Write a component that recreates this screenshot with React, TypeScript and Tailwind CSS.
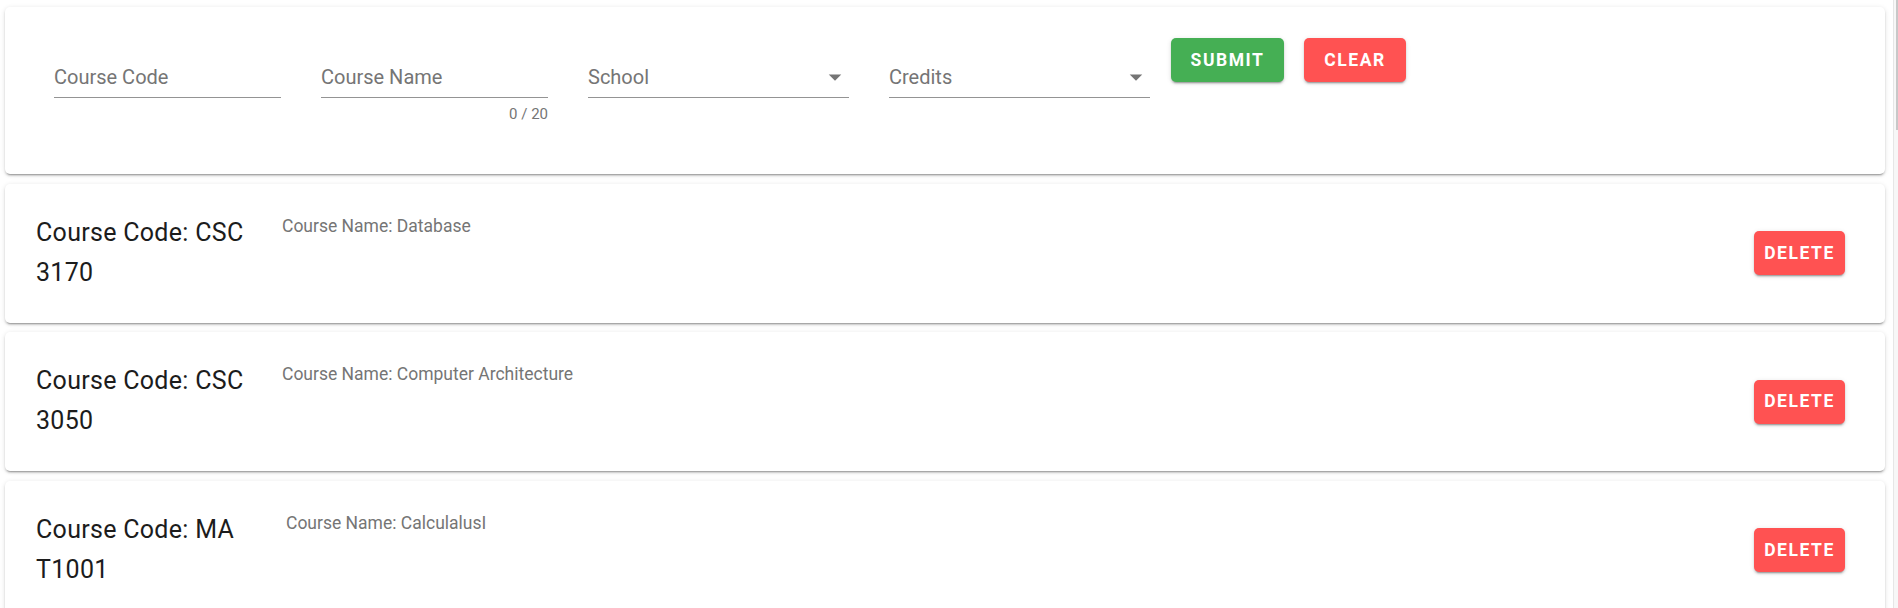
import { ReactNode } from "react"

const courses = [
  { code: "CSC 3170", name: "Database", nameGap: "ml-[37px]" },
  { code: "CSC 3050", name: "Computer Architecture", nameGap: "ml-[37px]" },
  { code: "MAT1001", name: "CalculalusI", nameGap: "ml-[41px]" },
]

const cardClass =
  "rounded-[5px] bg-white shadow-[0_3px_1px_-2px_rgba(0,0,0,0.2),0_2px_2px_0_rgba(0,0,0,0.14),0_1px_5px_0_rgba(0,0,0,0.12)]"

const btnShadow = "shadow-[0_3px_1px_-2px_rgba(0,0,0,0.2),0_2px_2px_0_rgba(0,0,0,0.14),0_1px_5px_0_rgba(0,0,0,0.12)]"

function TextField({ label, width, counter }: { label: string; width: string; counter?: string }) {
  return (
    <div className={`mt-[27px] flex flex-col ${width}`}>
      <div className="border-b border-[#949494] pb-[7px] text-[20px] leading-[25px] text-[#757575]">{label}</div>
      {counter && <div className="mt-[6px] text-right text-[15px] leading-[20px] text-[#757575]">{counter}</div>}
    </div>
  )
}

function SelectField({ label, width }: { label: string; width: string }) {
  return (
    <div className={`mt-[27px] flex flex-col ${width}`}>
      <div className="flex items-center justify-between border-b border-[#949494] pb-[7px] text-[20px] leading-[25px] text-[#757575]">
        <span>{label}</span>
        <svg viewBox="0 0 24 24" className="-my-[2.5px] -mr-[1px] size-[30px] -translate-y-[1px] fill-[#757575]">
          <path d="M7 10l5 5 5-5z" />
        </svg>
      </div>
    </div>
  )
}

function Button({ children, className }: { children: ReactNode; className: string }) {
  return (
    <button
      className={`flex h-[44px] items-center justify-center rounded-[5px] text-[17.5px] font-bold uppercase tracking-[0.089em] text-white ${btnShadow} ${className}`}
    >
      {children}
    </button>
  )
}

export default function App() {
  return (
    <div className="flex h-screen overflow-hidden bg-white font-[Roboto,sans-serif]">
      <div className="flex flex-1 flex-col gap-[9.5px] pl-[5px] pr-[8px] pt-[7px]">
        {/* form */}
        <div className={`flex h-[167px] shrink-0 items-start pl-[49px] pt-[31px] ${cardClass}`}>
          <TextField label="Course Code" width="w-[227px]" />
          <div className="ml-[40px]">
            <TextField label="Course Name" width="w-[227px]" counter="0 / 20" />
          </div>
          <div className="ml-[40px]">
            <SelectField label="School" width="w-[261px]" />
          </div>
          <div className="ml-[40px]">
            <SelectField label="Credits" width="w-[261px]" />
          </div>
          <Button className="ml-[21px] w-[113px] bg-[#45af54]">Submit</Button>
          <Button className="ml-[20px] w-[102px] bg-[#ff5252]">Clear</Button>
        </div>

        {/* course list */}
        {courses.map((c) => (
          <div key={c.code} className={`flex h-[139px] shrink-0 items-center pl-[31px] pr-[40px] ${cardClass}`}>
            <div className="flex self-start pt-[29px]">
              <div className="w-[209px] shrink-0 break-all text-[25px] font-normal leading-[40px] tracking-[0.3px] text-[#1c1c1c]">
                Course Code: {c.code}
              </div>
              <div className={`mt-[1px] text-[17.5px] leading-[25px] text-[#757575] ${c.nameGap}`}>
                Course Name: {c.name}
              </div>
            </div>
            <Button className="ml-auto w-[91px] bg-[#ff5252]">Delete</Button>
          </div>
        ))}
      </div>
      <div className="flex w-[5px] justify-end border-l border-[#e6e6e6] bg-[#f7f7f7]">
        <div className="h-[130px] w-[2px] bg-[#c8c8c8]" />
      </div>
    </div>
  )
}
